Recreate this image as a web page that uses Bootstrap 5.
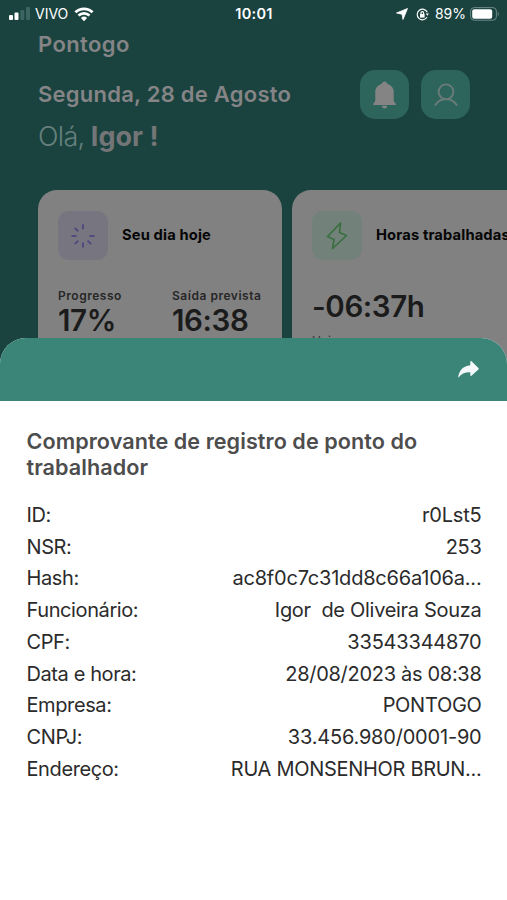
<!DOCTYPE html>
<html lang="pt-BR">
<head>
<meta charset="utf-8">
<meta name="viewport" content="width=device-width, initial-scale=1">
<title>Pontogo</title>
<link href="https://cdn.jsdelivr.net/npm/bootstrap@5.3.0/dist/css/bootstrap.min.css" rel="stylesheet">
<style>
  body { font-family: Inter, "Liberation Sans", sans-serif; background: #1a433f; line-height: 1; }
  .screen { width: 507px; height: 900px; }
  .status { height: 28px; padding: 0 7px 0 8px; color: #fff; font-size: 14px; }
  .status-side { width: 200px; }
  .status-gap { margin-left: 6px; }
  .clock { font-size: 14.5px; letter-spacing: .3px; }
  .muted-title { color: #858486; font-size: 22px; line-height: 26px; font-weight: 600; letter-spacing: .25px; }
  .brand-name { padding: 3px 38px 0; letter-spacing: .4px; }
  .head { padding: 13px 37px 0 38px; }
  .head-text { padding-top: 11px; }
  .hello { color: #747577; font-size: 27px; line-height: 32px; letter-spacing: 0; padding-top: 14px; }
  .hello span { font-weight: 300; color: #66807e; letter-spacing: -.7px; }
  .tile { width: 49px; height: 49px; border-radius: 15px; background: #2d655d; }
  .tiles { gap: 12px; }
  .cards { padding: 37px 0 0 38px; gap: 10px; }
  .panel { flex: 0 0 244px; min-width: 0; height: 200px; border-radius: 19px; background: #818181; padding: 21px 20px; }
  .panel-wide { flex-basis: 270px; }
  .panel-icon { flex: 0 0 50px; height: 49px; border-radius: 11px; margin-right: 14px; }
  .lilac { background: #77757f; }
  .mint { background: #72827a; }
  .panel-title { font-size: 14.7px; letter-spacing: .15px; color: #050505; white-space: nowrap; }
  .stat-label { font-size: 12px; line-height: 16px; letter-spacing: .53px; color: #272727; font-weight: 600; }
  .stat-value { font-size: 29.5px; line-height: 33px; letter-spacing: -.4px; color: #1b1b1b; font-weight: 600; }
  .stats { padding-top: 28px; }
  .stat-first { width: 114px; }
  .hours { padding-top: 30px; }
  .today { font-size: 12px; padding-top: 12px; color: #333; }
  .sheet { height: 562px; background: #fff; border-radius: 26px 26px 0 0; }
  .sheet-bar { height: 63px; background: #3a8578; padding: 0 28px; }
  .sheet-body { padding: 27px 25.5px 0 26.5px; }
  .sheet-title { font-size: 21.6px; line-height: 26px; font-weight: 600; letter-spacing: .06px; color: #4d4d4d; margin-bottom: 19px; }
  .entry { height: 31.75px; font-size: 20px; letter-spacing: -.3px; color: #2b2b2b; white-space: pre; }
  .entry span:first-child { letter-spacing: -.4px; }
  .entry .digits { letter-spacing: -.2px; }
</style>
<script src="https://cdn.jsdelivr.net/npm/bootstrap@5.3.0/dist/js/bootstrap.bundle.min.js"></script>
</head>
<body>
<div class="screen position-relative overflow-hidden">
  <header class="status d-flex justify-content-between align-items-center">
    <div class="status-side d-flex align-items-center">
      <svg width="23" height="14" viewBox="0 0 23 14"><g fill="#fff"><rect x="1" y="8" width="4" height="5" rx="1"/><rect x="6.500" y="5.500" width="4" height="7.500" rx="1"/></g><g fill="#3c6562"><rect x="12.300" y="3" width="4" height="10" rx="1"/><rect x="18" y="0" width="4" height="13" rx="1"/></g></svg>
      <span class="ms-1">VIVO</span>
      <svg class="status-gap" width="20" height="15" viewBox="0 0 20 15" fill="none" stroke="#fff" stroke-width="2.700"><path d="M1.400 5.300a12.300 12.300 0 0 1 17.200 0M4.500 8.500a8 8 0 0 1 11 0"/><path d="M10 14.200l-3.100-3.300a4.600 4.600 0 0 1 6.200 0z" fill="#fff" stroke="none"/></svg>
    </div>
    <span class="clock fw-semibold">10:01</span>
    <div class="status-side d-flex align-items-center justify-content-end">
      <svg width="12" height="12" viewBox="0 0 12 12"><path d="M11.500.5L7 11.500 6 6.200.5 5z" fill="#fff" stroke="#fff" stroke-width=".8" stroke-linejoin="round"/></svg>
      <svg class="ms-2" width="13" height="13" viewBox="0 0 13 13" fill="none" stroke="#fff" stroke-width="1.200"><path d="M11.300 4.200A5.300 5.300 0 1 0 11 9.300"/><path d="M9.800 5.500h3.200l-1.600 2.200z" fill="#fff" stroke="none"/><rect x="4" y="6" width="4.600" height="3.600" fill="#fff" stroke="none"/><path d="M5 6V5a1.300 1.300 0 0 1 2.600 0v1"/></svg>
      <span class="status-gap">89%</span>
      <svg class="ms-1" width="30" height="14" viewBox="0 0 30 14"><rect x=".6" y=".6" width="25.800" height="12.600" rx="3.500" fill="none" stroke="#6c8a87"/><rect x="2.200" y="2.200" width="20" height="9.600" rx="2" fill="#fff"/><path d="M27.800 4.600q2 2.400 0 4.800z" fill="#6c8a87"/></svg>
    </div>
  </header>

  <div class="brand-name muted-title">Pontogo</div>
  <div class="head d-flex justify-content-between">
    <div class="head-text">
      <div class="muted-title">Segunda, 28 de Agosto</div>
      <div class="hello fw-bold"><span>Olá,</span> Igor !</div>
    </div>
    <div class="tiles d-flex">
      <div class="tile d-flex align-items-center justify-content-center">
        <svg width="25" height="28" viewBox="0 0 25 28"><path fill="#858485" d="M12.500.5c1.400 0 2.300.9 2.500 2 3.900 1.800 6.700 4.300 6.700 8v8c0 2 .8 3 2.100 4.300.4.600.2 1.200-.5 1.200H1.700c-.7 0-.9-.6-.5-1.200 1.300-1.300 2.100-2.300 2.100-4.300v-8c0-3.700 2.800-6.200 6.700-8 .2-1.100 1.100-2 2.500-2zM9.700 24.800h5.600c-.2 1.600-1.400 2.700-2.800 2.700s-2.600-1.100-2.800-2.700z"/></svg>
      </div>
      <div class="tile d-flex align-items-center justify-content-center">
        <svg width="24" height="24" viewBox="0 0 24 24" fill="none" stroke="#697b79" stroke-width="1.900"><circle cx="12" cy="8.800" r="7.400"/><path d="M1 22.500C3.500 18.500 7.200 16 12 16s8.500 2.500 11 6.500"/></svg>
      </div>
    </div>
  </div>

  <main class="cards d-flex">
    <section class="panel">
      <div class="d-flex align-items-center">
        <div class="panel-icon lilac d-flex align-items-center justify-content-center">
          <svg width="24" height="24" viewBox="0 0 24 24" stroke="#504a80" stroke-width="1.900"><path d="M12 .3v5M12 18.500v5M.5 12h5M18.500 12h5M3.700 4l3.600 3.400M16.500 16.600l3.800 3.500M3.700 20.100l3.600-3.500"/></svg>
        </div>
        <span class="panel-title fw-bold">Seu dia hoje</span>
      </div>
      <div class="stats d-flex">
        <div class="stat-first"><div class="stat-label">Progresso</div><div class="stat-value">17%</div></div>
        <div><div class="stat-label text-nowrap">Saída prevista</div><div class="stat-value">16:38</div></div>
      </div>
    </section>
    <section class="panel panel-wide">
      <div class="d-flex align-items-center">
        <div class="panel-icon mint d-flex align-items-center justify-content-center">
          <svg width="22" height="28" viewBox="0 0 22 28" fill="none" stroke="#3b6f40" stroke-width="1.700" stroke-linejoin="round"><path d="M14.500 1.200L1.500 14.500l6.500 3-1.500 9L20.500 13.500l-7-3z"/></svg>
        </div>
        <span class="panel-title fw-bold">Horas trabalhadas</span>
      </div>
      <div class="hours"><div class="stat-value">-06:37h</div></div>
      <div class="today">Hoje</div>
    </section>
  </main>

  <section class="sheet position-absolute bottom-0 start-0 w-100 overflow-hidden">
    <div class="sheet-bar d-flex align-items-center justify-content-end">
      <svg width="21" height="17" viewBox="0 0 21 17"><path fill="#f4f8fa" d="M12.300.8c0-.7.700-.9 1.200-.5l6.900 6.700c.5.500.5 1 0 1.500l-6.900 6.200c-.5.400-1.200.2-1.200-.5v-3C7 11 3.500 12.500.8 16.200c-.3.300-.7.100-.6-.3C1.300 9.300 5.200 4.800 12.300 4.200z"/></svg>
    </div>
    <div class="sheet-body">
      <h1 class="sheet-title">Comprovante de registro de ponto do<br>trabalhador</h1>
      <div class="entry d-flex justify-content-between align-items-center"><span>ID:</span><span class="digits">r0Lst5</span></div>
      <div class="entry d-flex justify-content-between align-items-center"><span>NSR:</span><span>253</span></div>
      <div class="entry d-flex justify-content-between align-items-center"><span>Hash:</span><span class="digits">ac8f0c7c31dd8c66a106a...</span></div>
      <div class="entry d-flex justify-content-between align-items-center"><span>Funcionário:</span><span>Igor  de Oliveira Souza</span></div>
      <div class="entry d-flex justify-content-between align-items-center"><span>CPF:</span><span class="digits">33543344870</span></div>
      <div class="entry d-flex justify-content-between align-items-center"><span>Data e hora:</span><span>28/08/2023 às 08:38</span></div>
      <div class="entry d-flex justify-content-between align-items-center"><span>Empresa:</span><span>PONTOGO</span></div>
      <div class="entry d-flex justify-content-between align-items-center"><span>CNPJ:</span><span class="digits">33.456.980/0001-90</span></div>
      <div class="entry d-flex justify-content-between align-items-center"><span>Endereço:</span><span>RUA MONSENHOR BRUN...</span></div>
    </div>
  </section>
</div>
</body>
</html>
